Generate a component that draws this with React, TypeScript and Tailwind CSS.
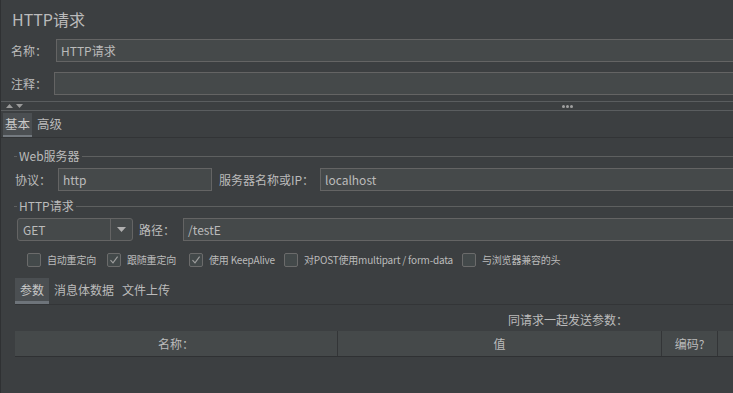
import { ReactNode } from 'react'

const font = { fontFamily: '"Noto Sans CJK SC", "Noto Sans", sans-serif' }

function Field({ value = '', className = '' }: { value?: string; className?: string }) {
  return (
    <div
      className={`flex h-[23px] items-center border border-[#646464] bg-[#45494a] px-[4px] text-[12px] text-[#bbbbbb] ${className}`}
    >
      {value}
    </div>
  )
}

function Group({ title }: { title: string }) {
  return (
    <div className="flex h-[14px] items-center pl-[13px]">
      <div className="h-px w-[3px] bg-[#5e6060]" />
      <span className="px-[2px] text-[12px] text-[#bbbbbb]">{title}</span>
      <div className="h-px flex-1 bg-[#5e6060]" />
    </div>
  )
}

function Check({ on, children, className = '' }: { on?: boolean; children: ReactNode; className?: string }) {
  return (
    <div className={`flex shrink-0 items-center whitespace-nowrap ${className}`}>
      <div className="flex h-[14px] w-[14px] shrink-0 items-center justify-center rounded-[2px] border border-[#6b6b6b] bg-[#43494a]">
        {on && (
          <svg width="10" height="10" viewBox="0 0 10 10">
            <path d="M1.5 5.2 L4 7.8 L8.6 1.6" fill="none" stroke="#a0a0a0" strokeWidth="1.1" />
          </svg>
        )}
      </div>
      <span className="ml-[6px] text-[10px] tracking-[-0.2px] text-[#bbbbbb]">{children}</span>
    </div>
  )
}

export default function App() {
  return (
    <div
      className="h-[393px] w-[733px] overflow-hidden border-l border-[#2f3133] bg-[#3c3f41] leading-none text-[#bbbbbb]"
      style={font}
    >
      <div className="flex h-[39px] items-center pb-[2px] pl-[11px] text-[16px]">HTTP请求</div>

      <div className="flex items-center">
        <span className="w-[55px] shrink-0 pl-[10px] text-[12px]">名称：</span>
        <Field value="HTTP请求" className="-mr-px flex-1" />
      </div>
      <div className="mt-[10px] flex items-center">
        <span className="w-[53px] shrink-0 pl-[10px] text-[12px]">注释：</span>
        <Field className="-mr-px flex-1" />
      </div>

      <div className="mt-[6px] flex h-[10px] items-center border-y border-[#5a5d5f]">
        <svg width="24" height="8" viewBox="0 0 24 8" className="ml-[4px]">
          <path d="M1 6 L4.5 2 L8 6 Z" fill="#9a9a9a" />
          <path d="M11 2 L18 2 L14.5 6 Z" fill="#9a9a9a" />
        </svg>
        <div className="ml-[533px] flex gap-[1px]">
          <div className="h-[3px] w-[3px] rounded-full bg-[#a0a0a0]" />
          <div className="h-[3px] w-[3px] rounded-full bg-[#a0a0a0]" />
          <div className="h-[3px] w-[3px] rounded-full bg-[#a0a0a0]" />
        </div>
      </div>

      <div className="flex h-[27px] items-end border-b border-[#323436] pl-[2px] text-[12.5px]">
        <div className="flex h-[24px] items-center border-b-2 border-[#747a80] bg-[#4b4f52] px-[2px] text-[#c8c8c8]">基本</div>
        <div className="flex h-[24px] items-center pb-[2px] pl-[5px]">高级</div>
      </div>

      <div className="mt-[11px]">
        <Group title="Web服务器" />
      </div>
      <div className="mt-[5px] flex items-center">
        <span className="w-[57px] shrink-0 pl-[14px] text-[12px]">协议：</span>
        <Field value="http" className="w-[154px] shrink-0" />
        <span className="ml-[7px] w-[101px] shrink-0 text-[12px]">服务器名称或IP：</span>
        <Field value="localhost" className="-mr-px flex-1" />
      </div>

      <div className="mt-[8px]">
        <Group title="HTTP请求" />
      </div>
      <div className="mt-[5px] flex items-center">
        <div className="ml-[16px] flex h-[23px] w-[116px] shrink-0 items-center rounded-[3px] border border-[#646464] bg-[#45494a] text-[12px]">
          <span className="flex-1 pl-[5px]">GET</span>
          <div className="flex h-full w-[22px] items-center justify-center border-l border-[#646464]">
            <svg width="9" height="5" viewBox="0 0 9 5">
              <path d="M0 0 L9 0 L4.5 5 Z" fill="#b0b0b0" />
            </svg>
          </div>
        </div>
        <span className="ml-[6px] w-[44px] shrink-0 text-[12px]">路径：</span>
        <Field value="/testE" className="-mr-px flex-1" />
      </div>

      <div className="mt-[12px] flex h-[14px] items-center pl-[26px]">
        <Check className="w-[80px]">自动重定向</Check>
        <Check on className="w-[82px]">跟随重定向</Check>
        <Check on className="w-[95px]">使用 KeepAlive</Check>
        <Check className="w-[178px]">对POST使用multipart / form-data</Check>
        <Check>与浏览器兼容的头</Check>
      </div>

      <div className="mt-[11px] ml-[14px] flex h-[27px] items-end border-b border-[#333537] text-[12px]">
        <div className="flex h-[26px] items-center border-b-[3px] border-[#6e747a] bg-[#4b4f52] px-[5px] text-[#c8c8c8]">参数</div>
        <div className="flex h-[26px] items-center pb-[3px] pl-[5px]">消息体数据</div>
        <div className="flex h-[26px] items-center pb-[3px] pl-[8px]">文件上传</div>
      </div>

      <div className="mt-[7px] flex h-[16px] items-center pl-[507px] text-[12px]">同请求一起发送参数：</div>

      <div className="mt-[3px] ml-[14px] flex h-[26px] border-b border-[#2f3133] bg-[#45494a] text-[12px]">
        <div className="flex w-[323px] items-center justify-center border-r border-[#333537]">名称：</div>
        <div className="flex w-[324px] items-center justify-center border-r border-[#333537]">值</div>
        <div className="flex w-[56px] items-center justify-center border-r border-[#333537]">编码?</div>
        <div className="flex-1" />
      </div>
    </div>
  )
}
